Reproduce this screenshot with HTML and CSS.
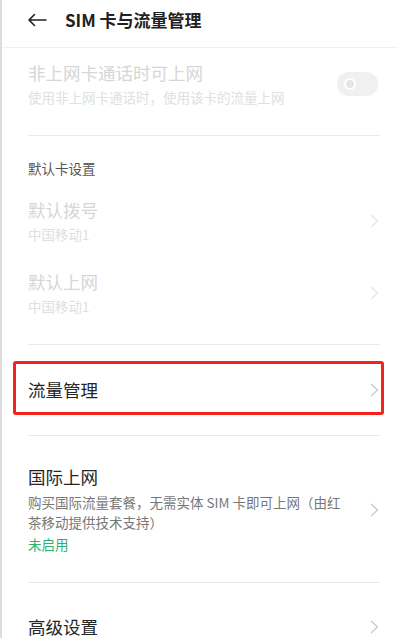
FILE: index.html
```html
<!DOCTYPE html>
<html lang="zh-CN">
<head>
    <meta charset="UTF-8">
    <meta name="viewport" content="width=device-width, initial-scale=1.0">
    <title>SIM 卡与流量管理</title>
    <link rel="stylesheet" href="styles.css">
</head>
<body>
    <div class="header">
        <svg class="back" width="20" height="14" viewBox="0 0 20 14">
            <path d="M19 7H2M7.5 1.5L2 7l5.5 5.5" fill="none" stroke="#222" stroke-width="1.6" stroke-linecap="round" stroke-linejoin="round"/>
        </svg>
        <h1>SIM 卡与流量管理</h1>
    </div>

    <!-- Data while calling on the other card -->
    <div class="group first">
        <div class="row disabled">
            <div class="text">
                <div class="title">非上网卡通话时可上网</div>
                <div class="sub">使用非上网卡通话时，使用该卡的流量上网</div>
            </div>
            <div class="switch"><span class="knob"></span></div>
        </div>
    </div>
    <div class="divider"></div>

    <!-- Default card -->
    <div class="group cards">
        <div class="group-title">默认卡设置</div>
        <div class="row disabled">
            <div class="text">
                <div class="title">默认拨号</div>
                <div class="sub">中国移动1</div>
            </div>
            <svg class="chevron" width="9" height="14" viewBox="0 0 9 14"><path d="M1 1l6.5 6L1 13" fill="none" stroke-width="1.3"/></svg>
        </div>
        <div class="row disabled">
            <div class="text">
                <div class="title">默认上网</div>
                <div class="sub">中国移动1</div>
            </div>
            <svg class="chevron" width="9" height="14" viewBox="0 0 9 14"><path d="M1 1l6.5 6L1 13" fill="none" stroke-width="1.3"/></svg>
        </div>
    </div>
    <div class="divider"></div>

    <!-- Data usage (highlighted) -->
    <div class="row highlight">
        <div class="text">
            <div class="title">流量管理</div>
        </div>
        <svg class="chevron" width="9" height="14" viewBox="0 0 9 14"><path d="M1 1l6.5 6L1 13" fill="none" stroke-width="1.3"/></svg>
    </div>
    <div class="divider"></div>

    <!-- Roaming -->
    <div class="row roaming">
        <div class="text">
            <div class="title">国际上网</div>
            <div class="desc">购买国际流量套餐，无需实体 SIM 卡即可上网（由红茶移动提供技术支持）</div>
            <div class="status">未启用</div>
        </div>
        <svg class="chevron" width="9" height="14" viewBox="0 0 9 14"><path d="M1 1l6.5 6L1 13" fill="none" stroke-width="1.3"/></svg>
    </div>
    <div class="divider"></div>

    <div class="row advanced">
        <div class="text">
            <div class="title">高级设置</div>
        </div>
        <svg class="chevron" width="9" height="14" viewBox="0 0 9 14"><path d="M1 1l6.5 6L1 13" fill="none" stroke-width="1.3"/></svg>
    </div>
</body>
</html>
```

FILE: styles.css
```css
body {
    margin: 0;
    height: 638px;
    overflow: hidden;
    background-color: #fff;
    border-left: 2px solid #dcdcdc;
    font-family: "Noto Sans CJK SC", "Noto Sans", sans-serif;
    color: #222;
}
.header {
    display: flex;
    align-items: center;
    height: 24px;
    padding: 8px 0 15px 25px;
    border-bottom: 1px solid #efefef;
}
.header .back {
    margin-right: 18px;
}
.header h1 {
    margin: 0;
    font-size: 17px;
    font-weight: bold;
    line-height: 24px;
}
.divider {
    height: 1px;
    margin: 0 18px 0 26px;
    background-color: #e9e9e9;
}
.row {
    display: flex;
    align-items: center;
    gap: 22px;
    padding: 13px 19px 13px 26px;
}
.text {
    flex: 1;
}
.title {
    font-size: 17.5px;
    line-height: 24px;
    color: #262626;
}
.sub {
    font-size: 13.5px;
    line-height: 20px;
    margin-top: 2px;
    color: #8a8a8a;
}
.chevron {
    stroke: #c8c8c8;
    flex-shrink: 0;
}
.row.disabled .title {
    color: #d6d6d6;
}
.row.disabled .sub {
    color: #e0e0e0;
}
.row.disabled .chevron {
    stroke: #e6e6e6;
}
.group.first .row {
    padding-bottom: 28px;
}
.group.cards {
    padding: 22px 0 15px;
}
.group-title {
    padding-left: 26px;
    font-size: 13.5px;
    line-height: 20px;
    color: #555;
    margin-bottom: 7px;
}
/* Toggle switch, off and greyed out */
.switch {
    position: relative;
    width: 41px;
    height: 24px;
    border-radius: 12px;
    background-color: #f0f0f0;
    margin-right: 1px;
}
.switch .knob {
    position: absolute;
    left: 7px;
    top: 6px;
    width: 8px;
    height: 8px;
    border: 2px solid #fff;
    border-radius: 50%;
    background-color: #e6e6e6;
}
/* Red box drawn around the data usage entry */
.row.highlight {
    margin: 16px 14px 20px 11px;
    padding: 14px 2px 10px 12px;
    border: 3px solid #f5211f;
    border-radius: 3px;
}
.row.roaming {
    padding-top: 29px;
    padding-bottom: 28px;
}
.desc {
    font-size: 13.5px;
    line-height: 20px;
    color: #777;
    margin-top: 3px;
}
.status {
    font-size: 13.5px;
    line-height: 20px;
    color: #2db36e;
    margin-top: 2px;
}
.row.advanced {
    padding-top: 32px;
}
```
